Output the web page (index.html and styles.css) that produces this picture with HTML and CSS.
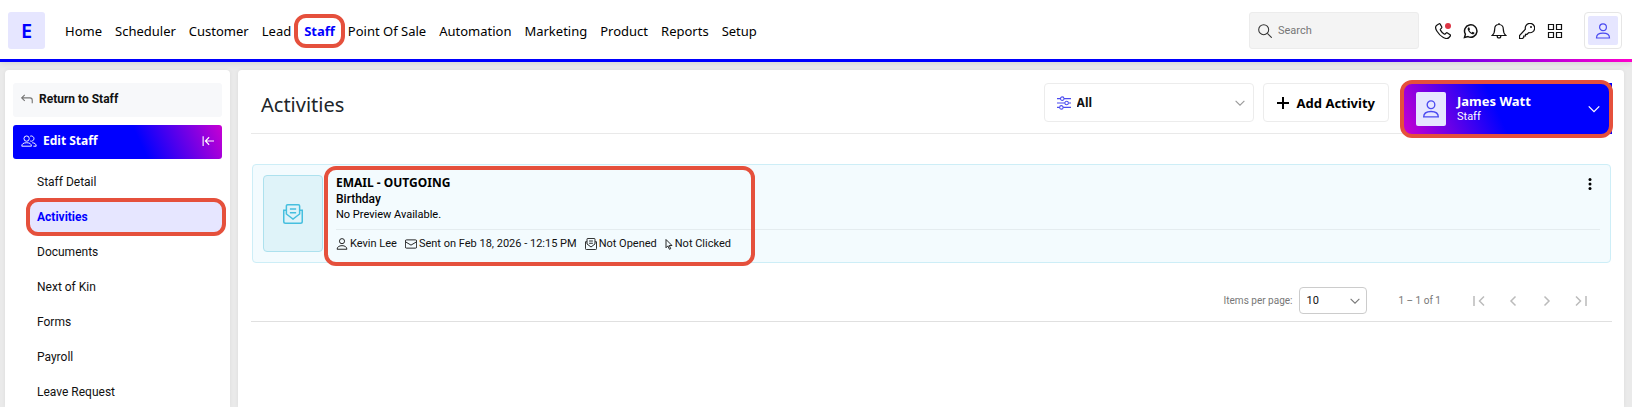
FILE: index.html
```
<!DOCTYPE html>
<html lang="en">
<head>
    <meta charset="UTF-8">
    <meta name="viewport" content="width=device-width, initial-scale=1.0">
    <title>Staff - Activities</title>
    <link rel="stylesheet" href="styles.css">
</head>
<body>

    <!-- Shared icon shapes -->
    <svg class="icon-defs" aria-hidden="true">
        <symbol id="icon-user" viewBox="0 0 16 16">
            <circle cx="8" cy="4.200" r="3.400"/>
            <path d="M1.500 15c0-3 2.600-4.800 6.500-4.800s6.500 1.800 6.500 4.800z"/>
        </symbol>
        <symbol id="icon-chevron" viewBox="0 0 16 16">
            <path d="M1 4.500l7 7 7-7"/>
        </symbol>
        <symbol id="icon-mail-open" viewBox="0 0 16 16">
            <path d="M2.700 8V1.600q0-1 1-1h8.600q1 0 1 1V8L8 12z"/>
            <path d="M2.500 5H.6v9q0 1.400 1.400 1.400h12q1.400 0 1.400-1.400V5h-1.900"/>
            <path d="M5.500 4h5M5.500 7h5"/>
        </symbol>
    </svg>

    <!-- Top bar -->
    <header class="topbar">
        <a class="logo" href="#">E</a>
        <nav class="main-nav">
            <a href="#">Home</a>
            <a href="#">Scheduler</a>
            <a href="#">Customer</a>
            <a href="#">Lead</a>
            <a class="active highlight" href="#">Staff</a>
            <a href="#">Point Of Sale</a>
            <a href="#">Automation</a>
            <a href="#">Marketing</a>
            <a href="#">Product</a>
            <a href="#">Reports</a>
            <a href="#">Setup</a>
        </nav>
        <label class="search">
            <svg class="icon" viewBox="0 0 16 16"><circle cx="6.500" cy="6.500" r="5.700"/><path d="M10.700 10.700l5 5"/></svg>
            <input type="search" placeholder="Search" aria-label="Search">
        </label>
        <div class="tools">
            <button class="tool" aria-label="Calls">
                <svg class="icon" viewBox="0 0 16 16"><path d="M3.700 1L1.800 2.200C.3 3.200.4 5.700 2 8.300s3.800 4.900 6.300 6.200 4.600 1.300 5.700 0l1.300-1.500q.6-.7-.2-1.300l-2.600-1.800q-.7-.5-1.300.1l-1.100 1q-.4.400-1 0C7.500 10 6.300 8.700 5.400 7.100q-.3-.6.1-1l1-1q.6-.6.200-1.300L5.200 1.200Q4.600.400 3.700 1z"/></svg>
                <span class="dot"></span>
            </button>
            <button class="tool" aria-label="WhatsApp">
                <svg class="icon" viewBox="0 0 16 16"><path class="bold" d="M1.500 14.500l.9-3.300A6.200 6.200 0 1 1 5 13.600z"/><path class="solid" d="M5.700 4.300c-.9.400-1.300 1.300-.9 2.400.8 2.200 2.400 3.700 4.400 4.500 1.200.4 2.200-.2 2.300-1.400l-1.900-1-1 1C7.600 9.300 6.900 8.500 6.300 7.300l.7-.9-.7-2z"/></svg>
            </button>
            <button class="tool" aria-label="Notifications">
                <svg class="icon" viewBox="0 0 16 16"><path d="M8 1.500c-2.800 0-4.300 2-4.300 4.500 0 3.500-.8 5-2.500 6.500h13.600C13.100 11 12.300 9.500 12.300 6c0-2.500-1.500-4.500-4.300-4.500zM8 0v1.500M6.200 13q0 2 1.800 2t1.800-2"/></svg>
            </button>
            <button class="tool" aria-label="Keys">
                <svg class="icon" viewBox="0 0 16 16"><path d="M6.400 6.200a4.700 4.700 0 1 1 3.400 3.400L8 11.300H6.500v1.700H4.700v1.500L3.500 15.500h-3v-3z"/><circle class="solid" cx="12" cy="4" r="1"/></svg>
            </button>
            <button class="tool" aria-label="Apps">
                <svg class="icon" viewBox="0 0 16 16"><path d="M1.500 1.500h5v5h-5zM9.500 1.500h5v5h-5zM1.500 9.500h5v5h-5zM9.500 9.500h5v5h-5z"/></svg>
            </button>
        </div>
        <button class="account" aria-label="Account">
            <span class="account-inner"><svg class="icon"><use href="#icon-user"/></svg></span>
        </button>
    </header>

    <div class="workspace">
        <!-- Sidebar -->
        <aside class="sidebar">
            <a class="return-link" href="#">
                <svg class="icon" viewBox="0 0 16 16"><path d="M5 2.500L1 6.500l4 4M1 6.500h11q3 0 3 3v4"/></svg>
                Return to Staff
            </a>
            <div class="side-head">
                <svg class="icon" viewBox="0 0 20 16"><circle cx="7" cy="5" r="3.300"/><path d="M1 14.500c0-3 2-4.300 6-4.300s6 1.300 6 4.300zM11.500 2a3.300 3.300 0 1 1 0 6M14 10.200c3.300.2 5 1.600 5 4.300h-3.500"/></svg>
                <span>Edit Staff</span>
                <button class="collapse" aria-label="Collapse menu">
                    <svg class="icon" viewBox="0 0 16 16"><path d="M1.500 1.500v13M16 8H4.500M9.500 3L4.500 8l5 5"/></svg>
                </button>
            </div>
            <nav class="side-nav">
                <a href="#">Staff Detail</a>
                <a class="active highlight" href="#">Activities</a>
                <a href="#">Documents</a>
                <a href="#">Next of Kin</a>
                <a href="#">Forms</a>
                <a href="#">Payroll</a>
                <a href="#">Leave Request</a>
            </nav>
        </aside>

        <!-- Content -->
        <main class="content">
            <div class="content-head">
                <h1>Activities</h1>
                <label class="filter">
                    <svg class="icon" viewBox="0 0 16 16"><path d="M0 3h4M8 3h8M0 8h9M13 8h3M0 13h3M7 13h9"/><circle cx="6" cy="3" r="2"/><circle cx="11" cy="8" r="2"/><circle cx="5" cy="13" r="2"/></svg>
                    <select aria-label="Filter activities">
                        <option>All</option>
                    </select>
                    <svg class="chevron"><use href="#icon-chevron"/></svg>
                </label>
                <button class="add-btn">
                    <svg class="icon" viewBox="0 0 12 12"><path d="M6 0v12M0 6h12"/></svg>
                    Add Activity
                </button>
                <button class="profile highlight">
                    <span class="profile-icon"><svg class="icon"><use href="#icon-user"/></svg></span>
                    <span class="profile-text">
                        <strong>James Watt</strong>
                        <span>Staff</span>
                    </span>
                    <svg class="chevron"><use href="#icon-chevron"/></svg>
                </button>
            </div>

            <article class="activity">
                <div class="activity-icon"><svg class="icon"><use href="#icon-mail-open"/></svg></div>
                <div class="activity-body">
                    <h2>EMAIL - OUTGOING</h2>
                    <p class="subject">Birthday</p>
                    <p class="preview">No Preview Available.</p>
                    <ul class="meta">
                        <li><svg class="icon"><use href="#icon-user"/></svg>Kevin Lee</li>
                        <li><svg class="icon" viewBox="0 0 16 16"><rect x=".5" y="2.500" width="15" height="11" rx="1.500"/><path d="M.5 5L8 9.500 15.500 5"/></svg>Sent on Feb 18, 2026 - 12:15 PM</li>
                        <li><svg class="icon"><use href="#icon-mail-open"/></svg>Not Opened</li>
                        <li><svg class="icon cursor" viewBox="0 0 10 16"><path d="M1 2v11l2.500-2.500L5.500 15l1.800-.8-2-4.200H9z"/></svg>Not Clicked</li>
                    </ul>
                </div>
                <button class="more" aria-label="More actions">
                    <svg viewBox="0 0 4 12"><circle cx="2" cy="1.500" r="1.500"/><circle cx="2" cy="6" r="1.500"/><circle cx="2" cy="10.500" r="1.500"/></svg>
                </button>
                <span class="frame"></span>
            </article>

            <div class="paginator">
                <label for="page-size">Items per page:</label>
                <span class="page-size">
                    <select id="page-size">
                        <option>10</option>
                    </select>
                    <svg class="chevron"><use href="#icon-chevron"/></svg>
                </span>
                <span class="range">1 – 1 of 1</span>
                <div class="pages">
                    <button disabled aria-label="First page"><svg viewBox="0 0 12 12"><path d="M1 1v10M11 1.500L6.500 6l4.500 4.500"/></svg></button>
                    <button disabled aria-label="Previous page"><svg viewBox="0 0 12 12"><path d="M8.500 1.500L4 6l4.500 4.500"/></svg></button>
                    <button disabled aria-label="Next page"><svg viewBox="0 0 12 12"><path d="M3.500 1.500L8 6l-4.500 4.500"/></svg></button>
                    <button disabled aria-label="Last page"><svg viewBox="0 0 12 12"><path d="M11 1v10M1 1.500L5.500 6 1 10.500"/></svg></button>
                </div>
            </div>
        </main>
    </div>

</body>
</html>
```
FILE: styles.css
```
* {
    box-sizing: border-box;
}

body {
    margin: 0;
    height: 100vh;
    display: flex;
    flex-direction: column;
    overflow: hidden;
    background-color: #eaeaea;
    font-family: Roboto, sans-serif;
    font-size: 12px;
    line-height: 16px;
    color: #111;
}

a {
    color: inherit;
    text-decoration: none;
}

button {
    padding: 0;
    border: none;
    background: none;
    font: inherit;
    color: inherit;
    cursor: pointer;
}

svg {
    display: block;
    flex: none;
    fill: none;
    stroke: currentColor;
    stroke-width: 1.2;
}

select {
    appearance: none;
    border: none;
    outline: none;
    background: none;
    font: inherit;
    color: #111;
}

.icon {
    width: 16px;
    height: 16px;
}

.icon-defs {
    position: absolute;
    width: 0;
    height: 0;
}

.chevron {
    width: 10px;
    height: 10px;
    stroke-width: 1.7;
}

/* Red callouts */
.highlight {
    position: relative;
}

.highlight::after,
.frame {
    content: "";
    position: absolute;
    border: 4px solid #e5503c;
    border-radius: 12px;
    pointer-events: none;
}

/* Top bar */
.topbar {
    display: flex;
    align-items: center;
    height: 62px;
    padding: 0 10px 0 8px;
    background-color: #fff;
    border-top: 2px solid #ececf4;
    border-bottom: 3px solid;
    border-image: linear-gradient(90deg, #00f 80%, #f0c) 1;
    border-image-width: 0 0 3px 0;
    box-shadow: 0 1px 6px rgba(0, 0, 0, 0.1);
}

.logo {
    width: 37px;
    height: 37px;
    margin-right: 20px;
    border-radius: 3px;
    background-color: #e6e6ff;
    color: #00f;
    font: 600 20px/37px "Noto Sans", sans-serif;
    text-align: center;
}

.main-nav {
    display: flex;
    gap: 13px;
    color: #000;
    font: 13px/20px "Noto Sans", sans-serif;
}

.main-nav .active {
    color: #00f;
    font-weight: 700;
}

.main-nav .highlight::after {
    inset: -7px -10px;
}

.search {
    display: flex;
    align-items: center;
    gap: 4px;
    width: 170px;
    height: 37px;
    margin-left: auto;
    padding: 0 8px;
    border: 1px solid #ececec;
    border-radius: 3px;
    background-color: #f4f4f4;
    color: #333;
    font-size: 11px;
}

.search .icon {
    width: 14px;
    height: 14px;
}

.search input {
    width: 100%;
    min-width: 0;
    border: none;
    outline: none;
    background: none;
    font: inherit;
}

.search input::placeholder {
    color: #777;
}

.tools {
    display: flex;
    gap: 12px;
    margin: 0 21px 0 16px;
}

.tool {
    position: relative;
}

.dot {
    position: absolute;
    top: 0;
    right: 0;
    width: 6px;
    height: 6px;
    border-radius: 50%;
    background-color: #dc3545;
}

.bold {
    stroke-width: 1.5;
}

.solid {
    fill: currentColor;
    stroke: none;
}

.account {
    width: 38px;
    height: 37px;
    padding: 3px;
    border: 1px solid #e6e6e6;
    border-radius: 4px;
}

.account-inner,
.profile-icon {
    display: flex;
    align-items: center;
    justify-content: center;
    height: 100%;
    border-radius: 2px;
    background-color: #e6e6ff;
    color: #4b4bf0;
}

/* Page columns */
.workspace {
    flex: 1;
    display: flex;
    gap: 8px;
    min-height: 0;
    padding: 8px 8px 0 5px;
}

.sidebar,
.content {
    background-color: #fff;
    border-radius: 4px 4px 0 0;
    box-shadow: 0 0 4px rgba(0, 0, 0, 0.06);
}

.sidebar {
    flex: none;
    width: 225px;
    padding: 13px 8px 0;
    overflow: hidden;
}

.return-link,
.side-head {
    display: flex;
    align-items: center;
    height: 34px;
    padding: 0 8px 2px;
    border-radius: 3px;
    font-weight: 700;
}

.return-link {
    gap: 6px;
    margin-bottom: 8px;
    background-color: #f7f8fa;
}

.return-link .icon {
    width: 12px;
    height: 12px;
    color: #777;
    stroke-width: 1.5;
}

.side-head {
    gap: 6px;
    background: linear-gradient(65deg, #00f 60%, #c800d2);
    color: #fff;
    font-family: "Noto Sans", sans-serif;
}

.collapse {
    margin-left: auto;
}

.collapse .icon {
    width: 12px;
    height: 12px;
    stroke-width: 1.5;
}

.side-nav {
    display: grid;
    gap: 5px;
    padding: 8px 0 0 17px;
}

.side-nav a {
    height: 30px;
    padding-left: 7px;
    line-height: 30px;
}

.side-nav .active {
    background-color: #e6e6ff;
    color: #00f;
    font-weight: 700;
}

.side-nav .highlight::after {
    inset: -4px;
}

/* Content */
.content {
    flex: 1;
    min-width: 0;
    padding: 13px 12px 0 13px;
}

.content-head {
    display: flex;
    align-items: flex-start;
    height: 51px;
    border-bottom: 1px solid #e9e9e9;
}

.content-head h1 {
    margin: 0 auto 0 10px;
    color: #212529;
    font: 20px/44px "Noto Sans", sans-serif;
}

.filter,
.add-btn {
    display: flex;
    align-items: center;
    height: 39px;
    border: 1px solid #ececec;
    border-radius: 4px;
}

.filter {
    gap: 6px;
    width: 210px;
    margin-right: 9px;
    padding: 0 8px 0 12px;
    color: #999;
}

.filter .icon {
    width: 14px;
    height: 14px;
    color: #4b4bf0;
}

.filter select {
    flex: 1;
    padding: 0;
    font: 700 12px/16px "Noto Sans", sans-serif;
}

.add-btn {
    gap: 8px;
    padding: 0 13px;
    color: #000;
    font: 700 13px/16px "Noto Sans", sans-serif;
}

.add-btn .icon {
    width: 12px;
    height: 12px;
    stroke-width: 2;
}

.profile {
    display: flex;
    align-items: center;
    width: 208px;
    height: 51px;
    margin-left: 15px;
    padding: 0 12px;
    background: linear-gradient(65deg, #c800d2, #00f 45%);
    color: #fff;
    font-size: 11px;
    text-align: left;
}

.profile.highlight::after {
    inset: -3px -1px -4px -4px;
}

.profile-icon {
    width: 30px;
    height: 34px;
    margin-right: 11px;
}

.profile-icon .icon {
    width: 18px;
    height: 20px;
}

.profile-text {
    display: grid;
    flex: 1;
}

.profile-text strong {
    font-family: "Noto Sans", sans-serif;
    font-size: 13px;
}

.profile .chevron {
    width: 12px;
    height: 12px;
}

/* Activity card */
.activity {
    position: relative;
    display: flex;
    margin: 30px 1px 0;
    padding: 10px;
    border: 1px solid #cdeef7;
    border-radius: 4px;
    background-color: #f3fbfe;
}

.activity-icon {
    display: flex;
    align-items: center;
    justify-content: center;
    width: 60px;
    margin-right: 13px;
    border: 1px solid #ade1ee;
    border-radius: 4px;
    background-color: #dff3f9;
    color: #46bfdf;
}

.activity-icon .icon {
    width: 20px;
    height: 20px;
}

.activity-body {
    flex: 1;
}

.activity-body h2,
.activity-body p {
    margin: 0;
    color: #000;
    font-size: 12px;
    line-height: 16px;
}

.activity-body h2 {
    font-family: "Noto Sans", sans-serif;
}

.activity-body .subject {
    font-weight: 500;
}

.activity-body .preview {
    font-size: 11px;
}

.meta {
    display: flex;
    gap: 8px;
    margin: 6px 0 0;
    padding: 6px 0 0;
    border-top: 1px solid #e4ecef;
    font-size: 11px;
    list-style: none;
}

.meta li {
    display: flex;
    align-items: center;
    gap: 2px;
}

.meta .icon {
    width: 12px;
    height: 12px;
}

.meta .cursor {
    width: 8px;
}

.more {
    position: absolute;
    top: 13px;
    right: 18px;
    color: #000;
}

.more svg {
    width: 4px;
    height: 12px;
    fill: currentColor;
    stroke: none;
}

.frame {
    top: 1px;
    left: 71px;
    width: 431px;
    height: 100px;
}

/* Paginator */
.paginator {
    display: flex;
    align-items: center;
    justify-content: flex-end;
    height: 59px;
    padding: 17px 19px 0 0;
    border-bottom: 1px solid #e0e0e0;
    color: #777;
    font-size: 10px;
}

.page-size {
    display: flex;
    align-items: center;
    width: 68px;
    height: 27px;
    margin: 0 31px 0 7px;
    padding: 0 6px;
    border: 1px solid #ccc;
    border-radius: 4px;
}

.page-size select {
    flex: 1;
    padding: 0;
    font-size: 11px;
}

.pages {
    display: flex;
    gap: 10px;
    margin-left: 26px;
}

.pages button {
    display: flex;
    align-items: center;
    justify-content: center;
    width: 24px;
    height: 24px;
    color: #bbb;
}

.pages svg {
    width: 12px;
    height: 12px;
    stroke-width: 1.5;
}
```
